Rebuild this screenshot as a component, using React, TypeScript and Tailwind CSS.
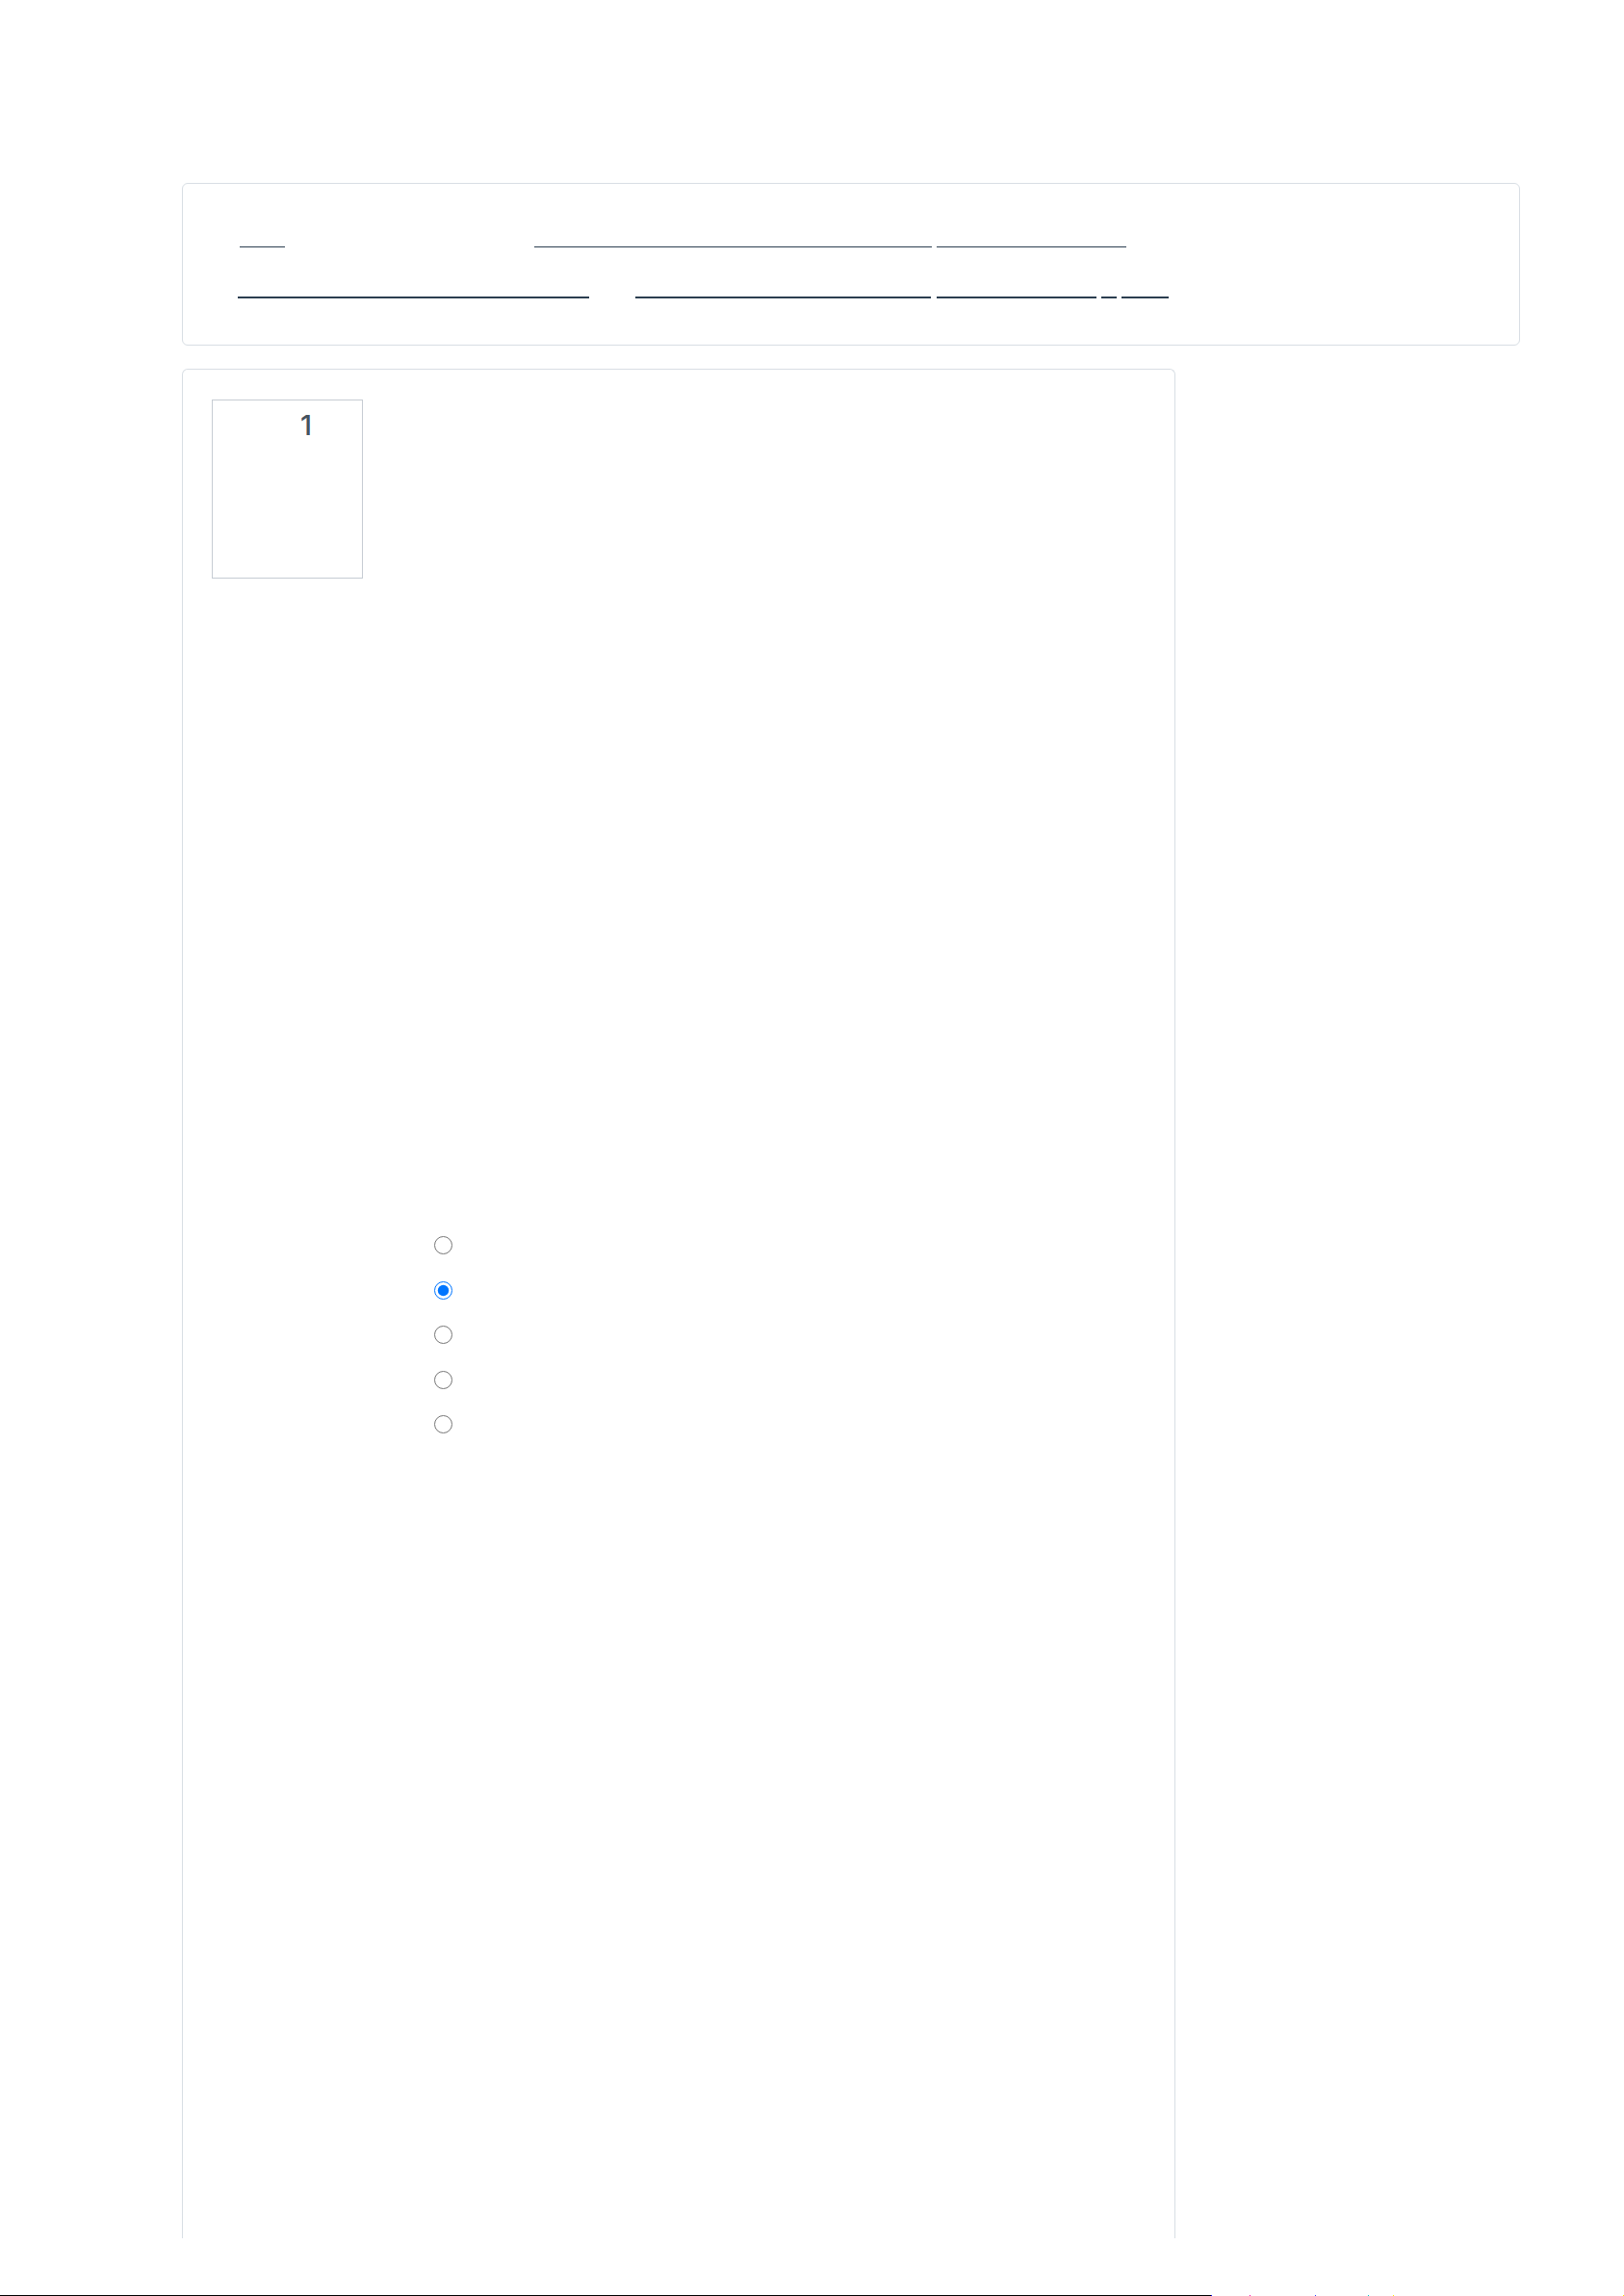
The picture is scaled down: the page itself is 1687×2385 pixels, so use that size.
import React from "react";

// underline-only links: widths and left gaps measured from the reference
const rowOne = [
  { gap: 0, w: 47 },
  { gap: 259, w: 413 },
  { gap: 5, w: 197 },
];

const rowTwo = [
  { gap: 0, w: 365 },
  { gap: 48, w: 307 },
  { gap: 6, w: 166 },
  { gap: 5, w: 16 },
  { gap: 5, w: 49 },
];

function LinkRow({ items, thick }: { items: { gap: number; w: number }[]; thick?: boolean }) {
  return (
    <div className="flex">
      {items.map((it, i) => (
        <a
          key={i}
          href="#"
          className={`block h-[20px] border-[#2c3e50] ${thick ? "border-b-2" : "border-b"}`}
          style={{ width: it.w, marginLeft: it.gap }}
        />
      ))}
    </div>
  );
}

export default function App() {
  return (
    <div className="flex h-[2385px] flex-col overflow-hidden bg-white font-['Inter',sans-serif] text-[#2c3e50]">
      <div className="pl-[189px] pt-[190px]">
        {/* header card with breadcrumb links */}
        <div className="h-[169px] w-[1390px] rounded-md border border-[#d8dee4] pt-[46px] pl-[59px]">
          <LinkRow items={rowOne} />
          <div className="mt-[33px] -ml-[2px]">
            <LinkRow items={rowTwo} thick />
          </div>
        </div>

        {/* main card, clipped at the bottom */}
        <div className="mt-[24px] h-[1942px] w-[1032px] rounded-t-md border border-b-0 border-[#d8dee4] pl-[30px] pt-[31px]">
          <div className="h-[186px] w-[157px] border border-[#c6ccd3] pl-[91px] pt-[11px]">
            <span className="text-[29px] font-medium leading-none text-[#45525e]">1</span>
          </div>

          <div className="ml-[231px] mt-[683px] flex flex-col gap-[27.6px]">
            {[0, 1, 2, 3, 4].map((i) => (
              <input
                key={i}
                type="radio"
                name="answer"
                defaultChecked={i === 1}
                className="m-0 h-[19px] w-[19px]"
              />
            ))}
          </div>
        </div>
      </div>

      <div className="flex-1" />

      {/* stray bottom line */}
      <div className="flex h-px">
        <div className="w-[1258px] bg-black" />
        <div className="w-px bg-[#0000ff]" />
        <div className="w-[39px]" />
        <div className="w-px bg-[#ff00aa]" />
        <div className="w-[67px]" />
        <div className="w-px bg-[#3344ff]" />
        <div className="w-[54px]" />
        <div className="w-px bg-[#00cccc]" />
        <div className="w-[25px]" />
        <div className="w-px bg-[#ffee00]" />
        <div className="flex-1" />
        <div className="w-px bg-[#ffee00]" />
      </div>
    </div>
  );
}
